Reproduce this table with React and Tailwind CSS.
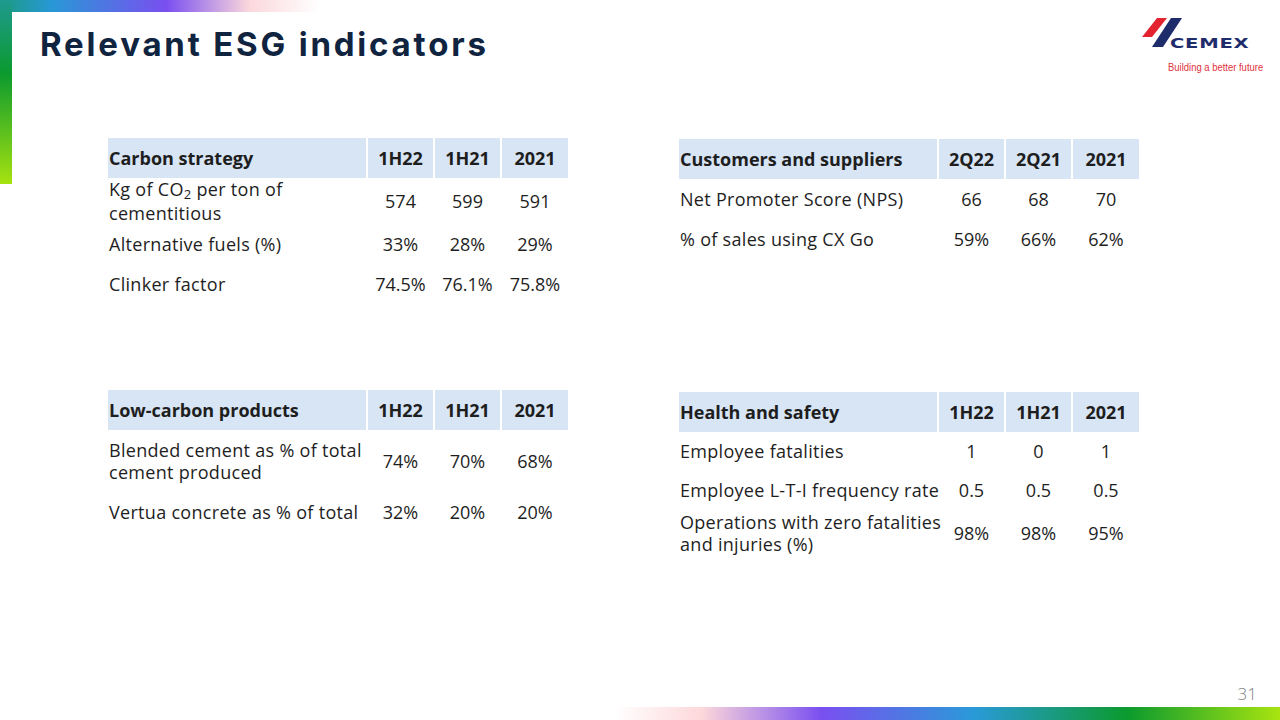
import React from 'react';

const tables = {
  carbon: {
    title: 'Carbon strategy',
    cols: ['1H22', '1H21', '2021'],
    rows: [
      { h: 'h-[46px]', label: <>Kg of CO<span className="text-[13px] relative top-[3px]">2</span> per ton of<br />cementitious</>, values: ['574', '599', '591'] },
      { h: 'h-[40px]', label: 'Alternative fuels (%)', values: ['33%', '28%', '29%'] },
      { h: 'h-[40px]', label: 'Clinker factor', values: ['74.5%', '76.1%', '75.8%'] },
    ],
  },
  customers: {
    title: 'Customers and suppliers',
    cols: ['2Q22', '2Q21', '2021'],
    rows: [
      { h: 'h-[40px]', label: 'Net Promoter Score (NPS)', values: ['66', '68', '70'] },
      { h: 'h-[40px]', label: '% of sales using CX Go', values: ['59%', '66%', '62%'] },
    ],
  },
  lowCarbon: {
    title: 'Low-carbon products',
    cols: ['1H22', '1H21', '2021'],
    rows: [
      { h: 'h-[62px]', label: <>Blended cement as % of total<br />cement produced</>, values: ['74%', '70%', '68%'] },
      { h: 'h-[40px]', label: 'Vertua concrete as % of total', values: ['32%', '20%', '20%'] },
    ],
  },
  health: {
    title: 'Health and safety',
    cols: ['1H22', '1H21', '2021'],
    rows: [
      { h: 'h-[38px]', label: 'Employee fatalities', values: ['1', '0', '1'] },
      { h: 'h-[40px]', label: 'Employee L-T-I frequency rate', values: ['0.5', '0.5', '0.5'] },
      { h: 'h-[46px]', label: <>Operations with zero fatalities<br />and injuries (%)</>, values: ['98%', '98%', '95%'] },
    ],
  },
};

const IndicatorTable = ({ data, className = '' }) => (
  <div className={`self-start grid grid-cols-[258px_65px_65px_66px] gap-x-[2px] text-[#1e1e1e] ${className}`}>
    <div className="h-[40px] bg-[#d7e5f5] flex items-center pl-[1px] font-bold text-[18px]">{data.title}</div>
    {data.cols.map((c) => (
      <div key={c} className="h-[40px] bg-[#d7e5f5] flex items-center justify-center font-bold text-[18px]">{c}</div>
    ))}
    {data.rows.map((row, i) => (
      <React.Fragment key={i}>
        <div className={`${row.h} flex items-center pl-[1px] text-[18px] leading-[22px] tracking-[0.3px] whitespace-nowrap`}>
          <span>{row.label}</span>
        </div>
        {row.values.map((v, j) => (
          <div key={j} className={`${row.h} flex items-center justify-center text-[18px] whitespace-nowrap`}>{v}</div>
        ))}
      </React.Fragment>
    ))}
  </div>
);

const Logo = () => (
  <div className="w-[140px] mt-[16px] flex flex-col">
    <div className="flex items-end h-[32px]">
      <svg width="60" height="32" viewBox="0 0 60 32" className="shrink-0">
        <polygon points="31,2 41,2 26,21 16,21" fill="#e3232f" />
        <polygon points="45,2 56,2 37,31 26,31" fill="#1f2c6c" />
      </svg>
      <div className="-ml-[16px] w-[78px] h-[12px] leading-[12px]">
        <span className="inline-block origin-left scale-x-[1.45] text-[13.5px] font-bold text-[#1f2c6c] tracking-[0.5px]" style={{ fontFamily: '"DejaVu Sans", sans-serif' }}>CEMEX</span>
      </div>
    </div>
    <div className="mt-[11px] pl-[42px] h-[12px] leading-[12px]">
      <span className="inline-block origin-left scale-x-[0.86] text-[11px] text-[#e0323c] whitespace-nowrap" style={{ fontFamily: '"Liberation Sans", Arial, sans-serif' }}>Building a better future</span>
    </div>
  </div>
);

export default function App() {
  return (
    <div className="relative w-[1280px] h-[720px] overflow-hidden bg-white flex flex-col" style={{ fontFamily: '"Open Sans", "Noto Sans", sans-serif' }}>
      {/* decorative gradient strips */}
      <div className="absolute top-0 left-0 w-[320px] h-[12px] bg-[linear-gradient(to_right,#1b9a80_0%,#2898d6_16%,#7a4ff0_52%,#fbd8dc_78%,#ffffff_100%)]" />
      <div className="absolute top-0 left-0 w-[12px] h-[184px] bg-[linear-gradient(to_bottom,#1f9a90_0%,#0b9a2e_40%,#a6e210_100%)]" />
      <div className="absolute bottom-0 left-[615px] right-0 h-[13px] bg-[linear-gradient(to_right,#ffffff_0%,#fdd8da_13%,#7a4ff0_31%,#2a9ad8_54%,#0b9a2e_77%,#a8e410_100%)]" />

      <header className="h-[138px] flex justify-between items-start pl-[40px] pr-[14px]">
        <h1 className="pt-[24px] text-[33px] leading-[40px] font-bold text-[#10243f] tracking-[2.8px]" style={{ fontFamily: 'Inter, sans-serif' }}>
          Relevant ESG indicators
        </h1>
        <Logo />
      </header>

      <main className="grid grid-cols-[460px_460px] grid-rows-[252px_auto] gap-x-[111px] pl-[108px]">
        <IndicatorTable data={tables.carbon} />
        <IndicatorTable data={tables.customers} className="mt-[1px]" />
        <IndicatorTable data={tables.lowCarbon} />
        <IndicatorTable data={tables.health} className="mt-[2px]" />
      </main>

      <footer className="mt-auto flex justify-end pr-[23px] pb-[16px]">
        <span className="text-[17px] font-light text-[#7f7f7f] leading-[20px]">31</span>
      </footer>
    </div>
  );
}
